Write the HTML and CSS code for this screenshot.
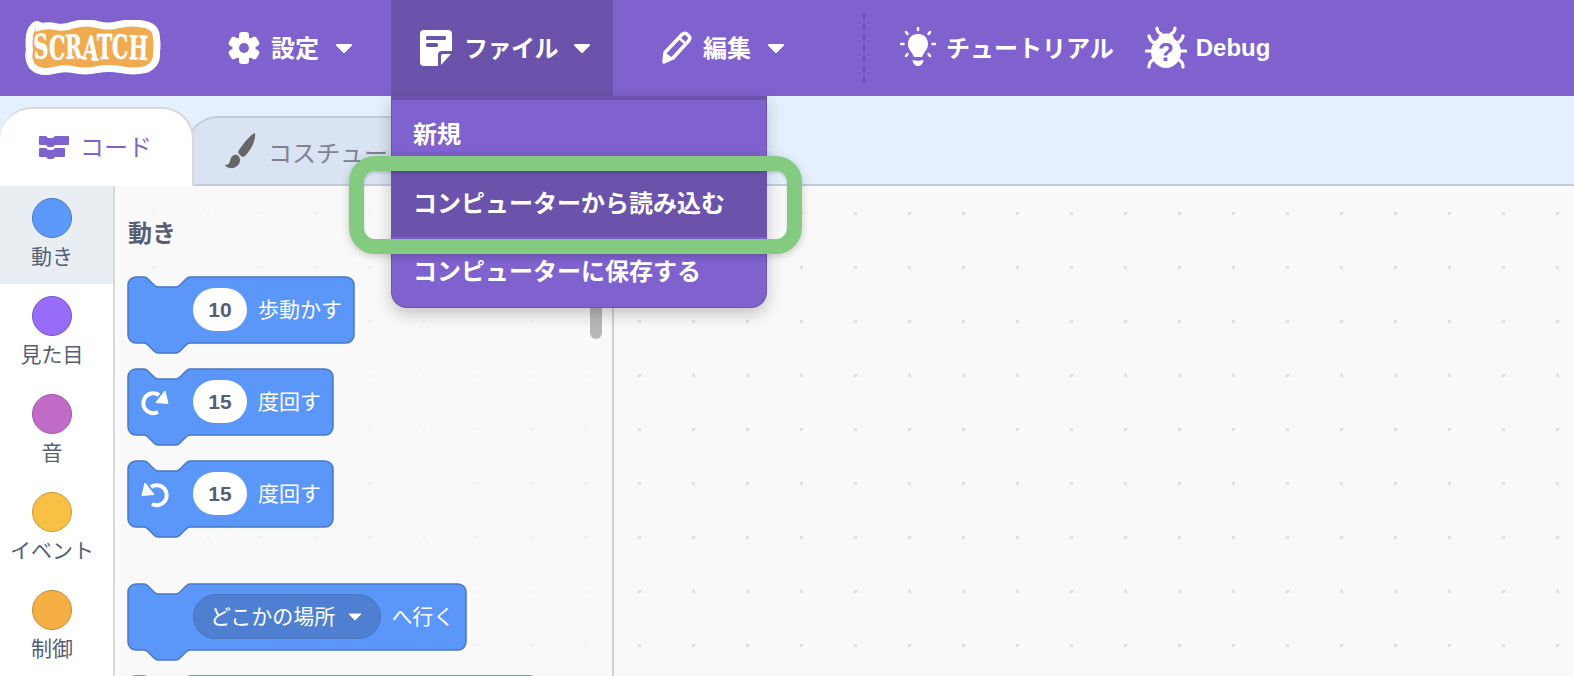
FILE: index.html
```html
<!DOCTYPE html>
<html lang="ja">
<head>
  <meta charset="UTF-8">
  <meta name="viewport" content="width=device-width, initial-scale=1.0">
  <title>Scratch</title>
  <link rel="stylesheet" href="styles.css">
</head>
<body>
  <header class="menubar">
    <svg class="logo" viewBox="0 0 140 56" aria-label="Scratch">
      <path class="logo-blob" d="M14 12q10-4 20-2q10 2 20-2q12-3 22 0q12 3 22 0q14-3 26 0q8 2 8 10q1 8 0 14q1 10-8 14q-12 3-24 0q-12-2-24 0q-12 3-24 0q-10-2-20 1q-12 3-18-3q-4-6-2-14q-1-8 0-14q1-6 4-8z"/>
      <text class="logo-text" x="13" y="39" textLength="114" lengthAdjust="spacingAndGlyphs" rotate="-4 2 -2 4 0 -2 2">SCRATCH</text>
    </svg>

    <div class="menu-item settings">
      <svg class="icon" width="34" height="34" viewBox="0 0 34 34">
        <g fill="#fff">
          <circle cx="17" cy="17" r="11.5"/>
          <rect x="12" y="1" width="10" height="32" rx="3"/>
          <rect x="12" y="1" width="10" height="32" rx="3" transform="rotate(60 17 17)"/>
          <rect x="12" y="1" width="10" height="32" rx="3" transform="rotate(120 17 17)"/>
        </g>
        <circle cx="17" cy="17" r="5" fill="#7f62ce"/>
      </svg>
      <span class="menu-label">設定</span>
      <svg class="caret" viewBox="0 0 18 11"><path d="M2 2h14l-7 7z"/></svg>
    </div>

    <div class="menu-item file active">
      <svg class="icon" width="34" height="38" viewBox="0 0 34 38">
        <path fill="#fff" d="M5 1h24a4 4 0 0 1 4 4v17H23a4 4 0 0 0-4 4v11H5a4 4 0 0 1-4-4V5a4 4 0 0 1 4-4z"/>
        <path fill="#fff" d="M32 25 22 36V27a2 2 0 0 1 2-2z"/>
        <rect x="7" y="7" width="20" height="4" rx="1.5" fill="#6b52ab"/>
        <rect x="7" y="14" width="12" height="4" rx="1.5" fill="#6b52ab"/>
      </svg>
      <span class="menu-label">ファイル</span>
      <svg class="caret" viewBox="0 0 18 11"><path d="M2 2h14l-7 7z"/></svg>
    </div>

    <div class="menu-item edit">
      <svg class="icon" width="32" height="34" viewBox="0 0 32 34">
        <path fill="none" stroke="#fff" stroke-width="3.500" stroke-linejoin="round" d="M22 3.500c2-2 4-1.500 6 .5s2.500 4 .5 6L13 27l-9 4 1-9.500z"/>
        <path fill="#fff" d="M5.500 22 13 27l-9 4z"/>
        <path stroke="#fff" stroke-width="2.500" d="m19 7 7 6"/>
      </svg>
      <span class="menu-label">編集</span>
      <svg class="caret" viewBox="0 0 18 11"><path d="M2 2h14l-7 7z"/></svg>
    </div>

    <div class="divider"></div>

    <div class="menu-item tutorial">
      <svg class="icon" width="36" height="42" viewBox="0 0 36 42">
        <path fill="#fff" d="M18 7c6 0 10 4 10 10 0 5-3 7-5 11-.5 1-1 2-1 2h-8s-.5-1-1-2c-2-4-5-6-5-11 0-6 4-10 10-10z"/>
        <path fill="#fff" d="M12.500 33c3 1 8 1 11 0-.5 4-3 6-5.500 6s-5-2-5.500-6z"/>
        <path stroke="#fff" stroke-width="2.500" stroke-linecap="round" d="M18 1v2M6 5l1.500 2M30 5l-1.500 2M1 17h2.500M32.500 17H35M6 29l1.500-2M30 29l-1.500-2"/>
      </svg>
      <span class="menu-label">チュートリアル</span>
    </div>

    <div class="menu-item debug">
      <svg class="icon" width="42" height="44" viewBox="0 0 42 44">
        <g fill="none" stroke="#fff" stroke-width="3.200" stroke-linecap="round">
          <path d="M12 2c0 3 2 5 4 6M30 2c0 3-2 5-4 6M4 10c1 4 3 6 6 7M38 10c-1 4-3 6-6 7M1 25h7M34 25h7M4 41c0-5 3-7 6-8M38 41c0-5-3-7-6-8"/>
        </g>
        <ellipse cx="21" cy="26" rx="15" ry="16" fill="#fff"/>
        <path fill="#fff" d="M13 12c1-6 15-6 16 0z"/>
        <text class="bug-mark" x="21" y="35" text-anchor="middle">?</text>
      </svg>
      <span class="debug-label">Debug</span>
    </div>
  </header>

  <main class="editor">
    <div class="tab-strip">
      <div class="tab tab-code">
        <svg class="icon" width="32" height="26" viewBox="0 0 32 26">
          <path fill="#7f62ce" d="M2 1h6l2 2h5l2-2h13a1 1 0 0 1 1 1v7a1 1 0 0 1-1 1H17l-2 2h-5l-2-2H2a1 1 0 0 1-1-1V2a1 1 0 0 1 1-1z"/>
          <path fill="#7f62ce" d="M2 13h6l2 2h5l2-2h9a1 1 0 0 1 1 1v7a1 1 0 0 1-1 1H17l-2 2h-5l-2-2H2a1 1 0 0 1-1-1v-7a1 1 0 0 1 1-1z"/>
        </svg>
        <span>コード</span>
      </div>
      <div class="tab tab-costume">
        <svg class="icon" width="34" height="38" viewBox="0 0 34 38">
          <path fill="#666" d="M31 1c1 6-3 16-10 23-1 1-3 1-4 0l-2-2c-1-1-1-3 0-4C20 11 26 3 31 1z"/>
          <path fill="#666" d="M10 23c3-1 6 1 6 5 0 5-5 9-10 8-3-.5-5-2-5-3 3 0 4-1 5-4 .5-3 2-5 4-6z"/>
        </svg>
        <span>コスチューム</span>
      </div>
    </div>

    <div class="panes">
      <nav class="categories">
        <div class="category selected"><span class="dot motion"></span>動き</div>
        <div class="category"><span class="dot looks"></span>見た目</div>
        <div class="category"><span class="dot sound"></span>音</div>
        <div class="category"><span class="dot events"></span>イベント</div>
        <div class="category"><span class="dot control"></span>制御</div>
      </nav>

      <section class="flyout">
        <div class="flyout-title">動き</div>

        <div class="block w-move">
          <svg class="block-bg" width="228" height="78" viewBox="0 0 228 78"><path d="M1 9a8 8 0 0 1 8-8h8c2 0 3 1 4 2l6 6c1 1 2 2 4 2h18c2 0 3-1 4-2l6-6c1-1 2-2 4-2h156a8 8 0 0 1 8 8v50a8 8 0 0 1-8 8H63c-2 0-3 1-4 2l-6 6c-1 1-2 2-4 2H31c-2 0-3-1-4-2l-6-6c-1-1-2-2-4-2H9a8 8 0 0 1-8-8z"/></svg>
          <span class="num-input">10</span>
          <span class="block-label">歩動かす</span>
        </div>

        <div class="block w-turn">
          <svg class="block-bg" width="207" height="78" viewBox="0 0 207 78"><path d="M1 9a8 8 0 0 1 8-8h8c2 0 3 1 4 2l6 6c1 1 2 2 4 2h18c2 0 3-1 4-2l6-6c1-1 2-2 4-2h135a8 8 0 0 1 8 8v50a8 8 0 0 1-8 8H63c-2 0-3 1-4 2l-6 6c-1 1-2 2-4 2H31c-2 0-3-1-4-2l-6-6c-1-1-2-2-4-2H9a8 8 0 0 1-8-8z"/></svg>
          <svg class="turn-icon" width="30" height="28" viewBox="0 0 30 28">
            <path fill="none" stroke="#fff" stroke-width="4" d="M18 6A10 10 0 1 0 17 23"/>
            <path fill="#fff" stroke="#fff" stroke-linejoin="round" d="M24 2l3 12.500-12-1z"/>
          </svg>
          <span class="num-input">15</span>
          <span class="block-label">度回す</span>
        </div>

        <div class="block w-turn">
          <svg class="block-bg" width="207" height="78" viewBox="0 0 207 78"><path d="M1 9a8 8 0 0 1 8-8h8c2 0 3 1 4 2l6 6c1 1 2 2 4 2h18c2 0 3-1 4-2l6-6c1-1 2-2 4-2h135a8 8 0 0 1 8 8v50a8 8 0 0 1-8 8H63c-2 0-3 1-4 2l-6 6c-1 1-2 2-4 2H31c-2 0-3-1-4-2l-6-6c-1-1-2-2-4-2H9a8 8 0 0 1-8-8z"/></svg>
          <svg class="turn-icon" width="30" height="28" viewBox="0 0 30 28">
            <g transform="matrix(-1 0 0 1 28 0)">
              <path fill="none" stroke="#fff" stroke-width="4" d="M18 6A10 10 0 1 0 17 23"/>
              <path fill="#fff" stroke="#fff" stroke-linejoin="round" d="M24 2l3 12.500-12-1z"/>
            </g>
          </svg>
          <span class="num-input">15</span>
          <span class="block-label">度回す</span>
        </div>

        <div class="block w-goto">
          <svg class="block-bg" width="340" height="78" viewBox="0 0 340 78"><path d="M1 9a8 8 0 0 1 8-8h8c2 0 3 1 4 2l6 6c1 1 2 2 4 2h18c2 0 3-1 4-2l6-6c1-1 2-2 4-2h268a8 8 0 0 1 8 8v50a8 8 0 0 1-8 8H63c-2 0-3 1-4 2l-6 6c-1 1-2 2-4 2H31c-2 0-3-1-4-2l-6-6c-1-1-2-2-4-2H9a8 8 0 0 1-8-8z"/></svg>
          <span class="drop-input">どこかの場所<svg class="drop-caret" viewBox="0 0 16 10"><path d="M2 2h12l-6 6z"/></svg></span>
          <span class="block-label">へ行く</span>
        </div>

        <div class="block w-next">
          <svg class="block-bg" width="412" height="78" viewBox="0 0 412 78"><path d="M1 9a8 8 0 0 1 8-8h8c2 0 3 1 4 2l6 6c1 1 2 2 4 2h18c2 0 3-1 4-2l6-6c1-1 2-2 4-2h340a8 8 0 0 1 8 8v50a8 8 0 0 1-8 8H9a8 8 0 0 1-8-8z"/></svg>
        </div>

        <div class="scroll-thumb"></div>
      </section>

      <section class="workspace"></section>
    </div>
  </main>

  <div class="file-menu">
    <div class="file-menu-row">新規</div>
    <div class="file-menu-row hover">コンピューターから読み込む</div>
    <div class="file-menu-row">コンピューターに保存する</div>
  </div>
  <div class="highlight"></div>
</body>
</html>
```

FILE: styles.css
```css
* {
  box-sizing: border-box;
}
html, body {
  height: 100%;
}
body {
  margin: 0;
  overflow: hidden;
  font-family: "Liberation Sans", "Noto Sans CJK JP", sans-serif;
  color: #575e75;
  background: #fff;
}

/* top bar */
.menubar {
  display: flex;
  align-items: center;
  height: 96px;
  background: #7f62ce;
  color: #fff;
  font-size: 24px;
  font-weight: 700;
}
.logo {
  width: 140px;
  height: 56px;
  margin-left: 21px;
  flex: none;
}
.logo-blob {
  fill: #f0ab51;
  stroke: #fff;
  stroke-width: 14;
  stroke-linejoin: round;
  paint-order: stroke;
}
.logo-text {
  font-family: "DejaVu Serif", serif;
  font-size: 33px;
  fill: #fff;
  stroke: #fff;
  stroke-width: 0.5;
}
.menu-item {
  display: flex;
  align-items: center;
  height: 100%;
  flex: none;
}
.menu-label {
  margin-bottom: 4px;
}
.icon {
  flex: none;
}
.caret {
  width: 18px;
  height: 11px;
  flex: none;
  fill: #fff;
  stroke: #fff;
  stroke-width: 2;
  stroke-linejoin: round;
}
.settings {
  margin-left: 66px;
  width: 164px;
}
.settings .menu-label {
  margin-left: 10px;
  margin-right: 16px;
}
.file {
  width: 222px;
  padding-left: 28px;
}
.file .menu-label {
  margin-left: 11px;
  margin-right: 15px;
  letter-spacing: -0.5px;
}
.active {
  background: #6b52ab;
}
.edit {
  margin-left: 47px;
  width: 203px;
}
.edit .menu-label {
  margin-left: 11px;
  margin-right: 16px;
}
.divider {
  width: 2px;
  height: 70px;
  border-left: 2px dashed #6b52ab;
  flex: none;
}
.tutorial {
  margin-left: 35px;
}
.tutorial .menu-label {
  margin-left: 10px;
}
.debug {
  margin-left: 31px;
}
.debug-label {
  margin-left: 9px;
  font-size: 24px;
}
.bug-mark {
  font-family: "Liberation Sans", sans-serif;
  font-weight: 700;
  font-size: 26px;
  fill: #7f62ce;
}

/* tabs */
.editor {
  height: 580px;
  display: flex;
  flex-direction: column;
  overflow: hidden;
  background: #e5f0ff;
}
.tab-strip {
  display: flex;
  align-items: flex-end;
  height: 90px;
  padding-top: 11px;
  border-bottom: 2px solid #c4cbdc;
  flex: none;
}
.tab {
  display: flex;
  align-items: center;
  font-size: 24px;
  border-radius: 32px 32px 0 0;
}
.tab-code {
  position: relative;
  z-index: 1;
  width: 194px;
  height: 79px;
  margin-bottom: -2px;
  padding-left: 38px;
  gap: 10px;
  color: #7f62ce;
  background: #fff;
  border: 2px solid #d9d9d9;
  border-left: 0;
  border-bottom: 0;
}
.tab-code span {
  margin-bottom: 4px;
}
.tab-costume {
  width: 240px;
  height: 68px;
  margin-left: -8px;
  padding-left: 36px;
  gap: 10px;
  color: #80828f;
  background: #d9e3f2;
  border: 2px solid #c4cbdc;
  border-bottom: 0;
  white-space: nowrap;
}

/* panes */
.panes {
  display: flex;
  flex: 1;
  min-height: 0;
  background: #f9f9f9;
}
.categories {
  width: 115px;
  flex: none;
  background: #fff;
  border-right: 2px solid #d9d9d9;
}
.category {
  display: flex;
  flex-direction: column;
  align-items: center;
  height: 98px;
  padding: 12px 9px 0 0;
  gap: 4px;
  font-size: 21px;
  line-height: 30px;
  white-space: nowrap;
}
.category.selected {
  background: #e9eef2;
}
.dot {
  width: 40px;
  height: 40px;
  border-radius: 50%;
  border: 1.500px solid;
  flex: none;
}
.motion { background: #5b9afb; border-color: #4a78c5; }
.looks { background: #966cf9; border-color: #7a57c8; }
.sound { background: #c06cc6; border-color: #a950ae; }
.events { background: #f8c044; border-color: #c99a35; }
.control { background: #f6af44; border-color: #c48c38; }

.flyout {
  position: relative;
  width: 499px;
  flex: none;
  padding: 33px 0 0 13px;
  border-right: 2px solid #d0d0d0;
  overflow: hidden;
  background-color: #f9f9f9;
  background-image: radial-gradient(circle 2px at 38.500px 27.500px, #f3f3f3 1.500px, transparent 2px);
  background-size: 54px 54px;
}
.flyout-title {
  font-size: 24px;
  font-weight: 700;
  line-height: 30px;
  margin-bottom: 28px;
}
.scroll-thumb {
  position: absolute;
  top: 0;
  left: 475px;
  width: 12px;
  height: 153px;
  border-radius: 0 0 6px 6px;
  background: #b8b8b8;
}
.workspace {
  flex: 1;
  background-color: #f9f9f9;
  background-image: radial-gradient(circle 2px at 25.500px 27.500px, #e0e0e0 1.500px, transparent 2px);
  background-size: 54px 54px;
}

/* blocks */
.block {
  position: relative;
  display: flex;
  align-items: center;
  height: 68px;
  margin-bottom: 24px;
  padding: 0 0 3px 65px;
  color: #fff;
  font-size: 21px;
}
.block-bg {
  position: absolute;
  top: -1px;
  left: -1px;
  fill: #5b96f9;
  stroke: #4a78c5;
  stroke-width: 1.500;
}
.turn-icon {
  position: absolute;
  top: 20px;
  left: 13px;
}
.num-input {
  position: relative;
  width: 54px;
  height: 43px;
  border-radius: 22px;
  background: #fff;
  color: #575e75;
  font-weight: 700;
  text-align: center;
  line-height: 43px;
}
.block-label {
  position: relative;
  margin: 0 0 4px 11px;
  white-space: nowrap;
}
.drop-input {
  position: relative;
  display: flex;
  align-items: center;
  height: 45px;
  padding: 0 17px 3px 16px;
  border-radius: 23px;
  background: #4f7fd0;
  border: 1.500px solid #4a73bd;
  white-space: nowrap;
}
.drop-input + .block-label {
  margin-left: 10px;
}
.drop-caret {
  width: 16px;
  height: 10px;
  margin: 3px 0 0 12px;
  fill: #fff;
  stroke: #fff;
  stroke-linejoin: round;
}
.w-goto {
  margin-top: 55px;
}

/* open menu and the callout on top of it */
.file-menu {
  position: absolute;
  top: 96px;
  left: 391px;
  width: 376px;
  height: 212px;
  border: 1.500px solid #6b52ab;
  border-top: 4px solid #6b52ab;
  border-radius: 0 0 16px 16px;
  background: #7f62ce;
  color: #fff;
  font-size: 24px;
  font-weight: 700;
  box-shadow: 0 6px 16px rgba(0, 0, 0, 0.22);
}
.file-menu-row {
  display: flex;
  align-items: center;
  height: 68.500px;
  padding: 0 0 3px 21px;
}
.file-menu-row.hover {
  background: #6b52ab;
}
.highlight {
  position: absolute;
  top: 156px;
  left: 349px;
  width: 453px;
  height: 98px;
  border: 15px solid #84ca80;
  border-radius: 26px;
  box-shadow: 0 2px 8px rgba(0, 0, 0, 0.2), inset 0 2px 3px rgba(0, 0, 0, 0.15);
}
```
